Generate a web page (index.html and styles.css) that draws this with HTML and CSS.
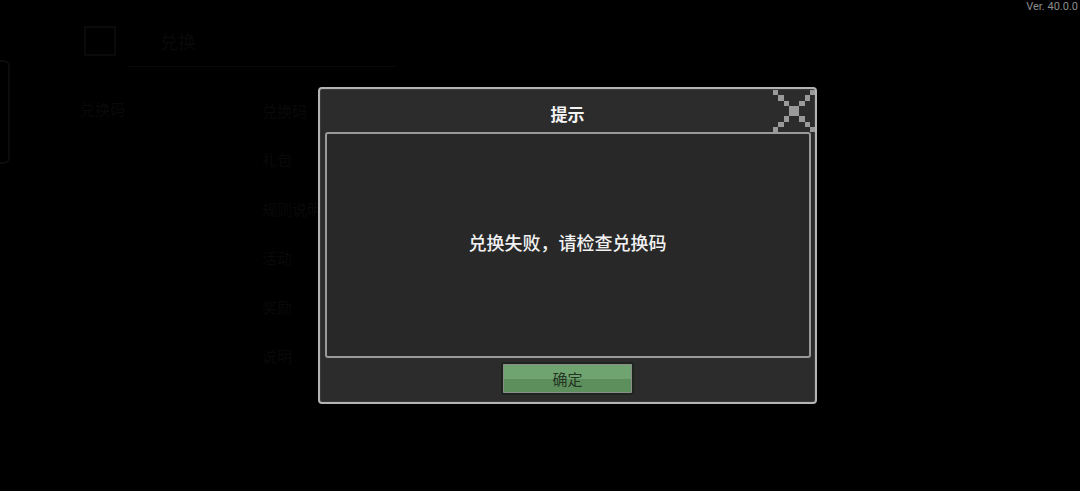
FILE: index.html
```html
<!DOCTYPE html>
<html lang="zh-CN">
<head>
    <meta charset="UTF-8">
    <meta name="viewport" content="width=device-width, initial-scale=1.0">
    <title>提示</title>
    <link rel="stylesheet" href="styles.css">
</head>
<body>
    <div class="version">Ver. 40.0.0</div>

    <div class="backdrop">
        <div class="side-tab"></div>
        <div class="bg-head">
            <span class="bg-icon"></span>
            <span class="bg-title">兑换</span>
        </div>
        <div class="bg-rule"></div>
        <div class="bg-label">兑换码</div>
        <div class="bg-list">
            <div>兑换码</div>
            <div>礼包</div>
            <div>规则说明</div>
            <div>活动</div>
            <div>奖励</div>
            <div>说明</div>
        </div>
    </div>

    <div class="overlay">
        <div class="dialog">
            <div class="dialog-title">提示</div>
            <svg class="close" width="42" height="42" viewBox="0 0 8 8" shape-rendering="crispEdges">
                <g fill="#9a9a9a">
                    <rect x="0" y="0" width="1" height="1"/>
                    <rect x="1" y="1" width="1" height="1"/>
                    <rect x="2" y="2" width="1" height="1"/>
                    <rect x="3" y="3" width="2" height="2"/>
                    <rect x="5" y="5" width="1" height="1"/>
                    <rect x="6" y="6" width="1" height="1"/>
                    <rect x="7" y="7" width="1" height="1"/>
                    <rect x="7" y="0" width="1" height="1"/>
                    <rect x="6" y="1" width="1" height="1"/>
                    <rect x="5" y="2" width="1" height="1"/>
                    <rect x="2" y="5" width="1" height="1"/>
                    <rect x="1" y="6" width="1" height="1"/>
                    <rect x="0" y="7" width="1" height="1"/>
                </g>
            </svg>
            <div class="dialog-body">兑换失败，请检查兑换码</div>
            <div class="dialog-foot">
                <div class="btn-ok">确定</div>
            </div>
        </div>
    </div>
</body>
</html>
```

FILE: styles.css
```css
body {
    margin: 0;
    width: 1080px;
    height: 491px;
    background: #000;
    font-family: "Noto Sans CJK SC", "Noto Sans", sans-serif;
    overflow: hidden;
    position: relative;
}
.version {
    position: absolute;
    top: 0;
    right: 2px;
    font-family: Roboto, "Noto Sans", sans-serif;
    font-size: 11px;
    line-height: 14px;
    color: #8c8c8c;
}

/* faint page behind the modal */
.backdrop {
    color: #090909;
    font-size: 15px;
}
.side-tab {
    position: absolute;
    left: -10px;
    top: 60px;
    width: 16px;
    height: 100px;
    border: 2px solid #0c0c0c;
    border-radius: 6px;
}
.bg-head {
    position: absolute;
    left: 84px;
    top: 26px;
    display: flex;
    align-items: center;
    gap: 44px;
}
.bg-icon {
    width: 28px;
    height: 26px;
    border: 2px solid #0a0a0a;
}
.bg-title {
    font-size: 18px;
}
.bg-rule {
    position: absolute;
    left: 128px;
    top: 66px;
    width: 268px;
    height: 1px;
    background: #080808;
}
.bg-label {
    position: absolute;
    left: 80px;
    top: 98px;
}
.bg-list {
    position: absolute;
    left: 262px;
    top: 100px;
    display: flex;
    flex-direction: column;
    gap: 28px;
}

/* modal */
.dialog {
    position: absolute;
    left: 318px;
    top: 87px;
    width: 495px;
    height: 313px;
    border: 2px solid #b4b4b4;
    border-radius: 4px;
    background: #2c2c2c;
    display: flex;
    flex-direction: column;
    align-items: center;
    box-shadow: inset 0 0 0 1px #3a3a3a;
}
.dialog-title {
    height: 43px;
    line-height: 50px;
    font-size: 17px;
    font-weight: bold;
    color: #f4f4f4;
}
.close {
    position: absolute;
    right: 0;
    top: 1px;
}
.dialog-body {
    box-sizing: border-box;
    width: 486px;
    height: 226px;
    border: 2px solid #9a9a9a;
    border-radius: 3px;
    background: #282828;
    display: flex;
    justify-content: center;
    align-items: center;
    font-size: 18px;
    font-weight: 500;
    color: #f2f2f2;
    padding-bottom: 6px;
}
.dialog-foot {
    flex: 1;
    display: flex;
    align-items: center;
    padding-bottom: 4px;
}
.btn-ok {
    box-sizing: border-box;
    width: 133px;
    height: 33px;
    border: 2px solid #1e251e;
    outline: 1px solid #8c8c8c;
    outline-offset: -3px;
    border-radius: 3px;
    background: linear-gradient(#6fa36f 0, #6fa36f 50%, #5d8f5d 50%, #5d8f5d 100%);
    display: flex;
    justify-content: center;
    align-items: center;
    font-size: 15px;
    color: #243524;
}
```
